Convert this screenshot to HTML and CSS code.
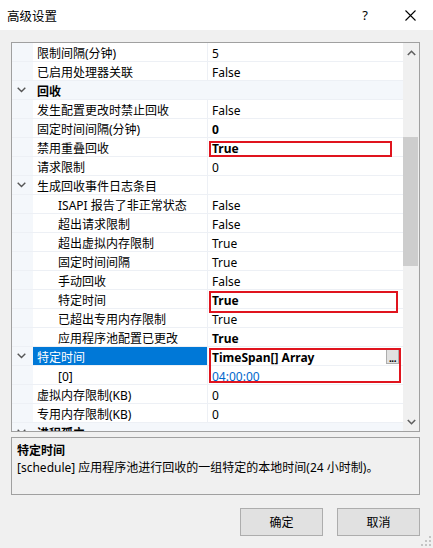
FILE: index.html
```html
<!DOCTYPE html>
<html lang="zh-CN">
<head>
<meta charset="utf-8">
<title>高级设置</title>
<link rel="stylesheet" href="styles.css">
</head>
<body>
<div class="dialog">
  <div class="titlebar">
    <span class="title">高级设置</span>
    <span class="help">?</span>
    <svg class="close" width="11" height="11" viewBox="0 0 11 11"><path d="M0.5 0.5L10.5 10.5M10.5 0.5L0.5 10.5" stroke="#000" stroke-width="1.1" fill="none"/></svg>
  </div>
  <div class="content">
    <div class="grid">
      <div class="rows">
        <div class="row"><div class="gut"></div><div class="name">限制间隔(分钟)</div><div class="val">5</div></div>
        <div class="row"><div class="gut"></div><div class="name">已启用处理器关联</div><div class="val">False</div></div>
        <div class="row cat"><div class="gut"><svg class="chev" width="9" height="6" viewBox="0 0 9 6"><path d="M0.7 0.8L4.5 4.6L8.3 0.8" stroke="#555" stroke-width="1.4" fill="none"/></svg></div><div class="catname">回收</div></div>
        <div class="row"><div class="gut"></div><div class="name">发生配置更改时禁止回收</div><div class="val">False</div></div>
        <div class="row"><div class="gut"></div><div class="name">固定时间间隔(分钟)</div><div class="val b">0</div></div>
        <div class="row"><div class="gut"></div><div class="name">禁用重叠回收</div><div class="val b">True</div></div>
        <div class="row"><div class="gut"></div><div class="name">请求限制</div><div class="val">0</div></div>
        <div class="row"><div class="gut"><svg class="chev" width="9" height="6" viewBox="0 0 9 6"><path d="M0.7 0.8L4.5 4.6L8.3 0.8" stroke="#555" stroke-width="1.4" fill="none"/></svg></div><div class="name">生成回收事件日志条目</div><div class="val"></div></div>
        <div class="row"><div class="gut"></div><div class="name sub">ISAPI 报告了非正常状态</div><div class="val">False</div></div>
        <div class="row"><div class="gut"></div><div class="name sub">超出请求限制</div><div class="val">False</div></div>
        <div class="row"><div class="gut"></div><div class="name sub">超出虚拟内存限制</div><div class="val">True</div></div>
        <div class="row"><div class="gut"></div><div class="name sub">固定时间间隔</div><div class="val">True</div></div>
        <div class="row"><div class="gut"></div><div class="name sub">手动回收</div><div class="val">False</div></div>
        <div class="row"><div class="gut"></div><div class="name sub">特定时间</div><div class="val b">True</div></div>
        <div class="row"><div class="gut"></div><div class="name sub">已超出专用内存限制</div><div class="val">True</div></div>
        <div class="row"><div class="gut"></div><div class="name sub">应用程序池配置已更改</div><div class="val b">True</div></div>
        <div class="row"><div class="gut"><svg class="chev" width="9" height="6" viewBox="0 0 9 6"><path d="M0.7 0.8L4.5 4.6L8.3 0.8" stroke="#555" stroke-width="1.4" fill="none"/></svg></div><div class="name sel">特定时间</div><div class="val b">TimeSpan[] Array<span class="ell">...</span></div></div>
        <div class="row"><div class="gut"></div><div class="name sub">[0]</div><div class="val blue">04:00:00</div></div>
        <div class="row"><div class="gut"></div><div class="name">虚拟内存限制(KB)</div><div class="val">0</div></div>
        <div class="row"><div class="gut"></div><div class="name">专用内存限制(KB)</div><div class="val">0</div></div>
        <div class="row cat last"><div class="gut"><svg class="chev" width="9" height="6" viewBox="0 0 9 6"><path d="M0.7 0.8L4.5 4.6L8.3 0.8" stroke="#555" stroke-width="1.4" fill="none"/></svg></div><div class="catname">进程孤立</div></div>
        <div class="mark m1"></div>
        <div class="mark m2"></div>
        <div class="mark m3"></div>
      </div>
      <div class="scrollbar">
        <svg class="arrow" width="9" height="6" viewBox="0 0 9 6"><path d="M0.8 5L4.5 1.3L8.2 5" stroke="#606060" stroke-width="1.6" fill="none"/></svg>
        <div class="track"><div class="thumb"></div></div>
        <svg class="arrow" width="9" height="6" viewBox="0 0 9 6"><path d="M0.8 1L4.5 4.7L8.2 1" stroke="#606060" stroke-width="1.6" fill="none"/></svg>
      </div>
    </div>
    <div class="desc">
      <div class="desc-title">特定时间</div>
      <div class="desc-text">[schedule] 应用程序池进行回收的一组特定的本地时间(24 小时制)。</div>
    </div>
    <div class="buttons">
      <button class="btn">确定</button>
      <button class="btn">取消</button>
    </div>
  </div>
  <svg class="grip" width="10" height="10" viewBox="0 0 10 10">
    <rect x="8" y="0" width="2" height="2" fill="#c4c4c4"/>
    <rect x="4" y="4" width="2" height="2" fill="#c4c4c4"/>
    <rect x="8" y="4" width="2" height="2" fill="#c4c4c4"/>
    <rect x="0" y="8" width="2" height="2" fill="#c4c4c4"/>
    <rect x="4" y="8" width="2" height="2" fill="#c4c4c4"/>
    <rect x="8" y="8" width="2" height="2" fill="#c4c4c4"/>
  </svg>
</div>
</body>
</html>
```

FILE: styles.css
```css
* { box-sizing: border-box; }
html, body { margin: 0; padding: 0; }
body {
  width: 433px;
  height: 548px;
  overflow: hidden;
  background: #f0f0f0;
  font-family: "Noto Sans", "Noto Sans CJK SC", sans-serif;
  font-size: 12px;
  color: #000;
}
.dialog { position: relative; width: 433px; height: 548px; }
.titlebar {
  height: 30px;
  background: #fff;
  display: flex;
  align-items: center;
  padding-left: 7px;
}
.title { font-size: 12.5px; flex: 1; padding-top: 1px; }
.help { font-size: 13px; margin-right: 37px; font-family: "Noto Sans", sans-serif; }
.close { margin-right: 17px; }
.content { padding: 12px 13px 0 11px; }
.grid {
  height: 390px;
  border: 1px solid #a0a0a0;
  background: #fff;
  display: flex;
}
.rows {
  position: relative;
  width: 392px;
  overflow: hidden;
}
.row {
  display: flex;
  height: 19px;
  border-bottom: 1px solid #edf0f5;
  line-height: 15px;
  white-space: nowrap;
}
.row.last { height: 8px; overflow: hidden; border-bottom: 0; }
.gut {
  width: 21px;
  flex: none;
  background: #f4f7fb;
  display: flex;
  align-items: center;
  padding-left: 5px;
}
.row.last .gut { align-items: flex-start; padding-top: 6px; }
.name {
  width: 175px;
  flex: none;
  padding-left: 4px;
  padding-top: 3px;
  border-right: 1px solid #edf0f5;
}
.name.sub { padding-left: 25px; }
.name.sel { background: #0078d7; color: #fff; }
.val {
  flex: 1;
  padding-left: 4px;
  padding-top: 3px;
  display: flex;
  align-items: center;
}
.val.b { font-weight: bold; }
.val.blue { color: #0066cc; }
.row.cat { background: #f4f7fb; }
.catname { padding-left: 4px; padding-top: 3px; font-weight: bold; }
.ell {
  margin-left: auto;
  margin-right: 4px;
  margin-top: -2px;
  width: 13px;
  height: 15px;
  background: #e1e1e1;
  border: 1px solid #adadad;
  font-weight: bold;
  font-size: 10px;
  line-height: 16px;
  text-align: center;
  letter-spacing: -0.5px;
  overflow: hidden;
}
.mark {
  position: absolute;
  border: 2px solid #e0141e;
  left: 197px;
}
.m1 { top: 98px; width: 183px; height: 16px; }
.m2 { top: 248px; width: 189px; height: 22px; }
.m3 { top: 305px; width: 192px; height: 35px; }
.scrollbar {
  width: 16px;
  background: #f0f0f0;
  display: flex;
  flex-direction: column;
  align-items: center;
}
.arrow { flex: none; margin: 7px 0; }
.track { flex: 1; width: 100%; padding: 74px 1px 146px 0; }
.thumb { width: 15px; height: 129px; background: #cdcdcd; }
.desc {
  margin-top: 5px;
  height: 58px;
  border: 1px solid #a0a0a0;
  padding: 4px 5px;
}
.desc-title { font-weight: bold; line-height: 17px; }
.desc-text { line-height: 17px; }
.buttons {
  display: flex;
  justify-content: flex-end;
  gap: 14px;
  margin-top: 13px;
}
.btn {
  width: 83px;
  height: 28px;
  background: #e1e1e1;
  border: 1px solid #adadad;
  font-family: inherit;
  font-size: 12px;
  padding: 0;
  color: #000;
}
.grip { position: absolute; right: 2px; bottom: 2px; }
```
